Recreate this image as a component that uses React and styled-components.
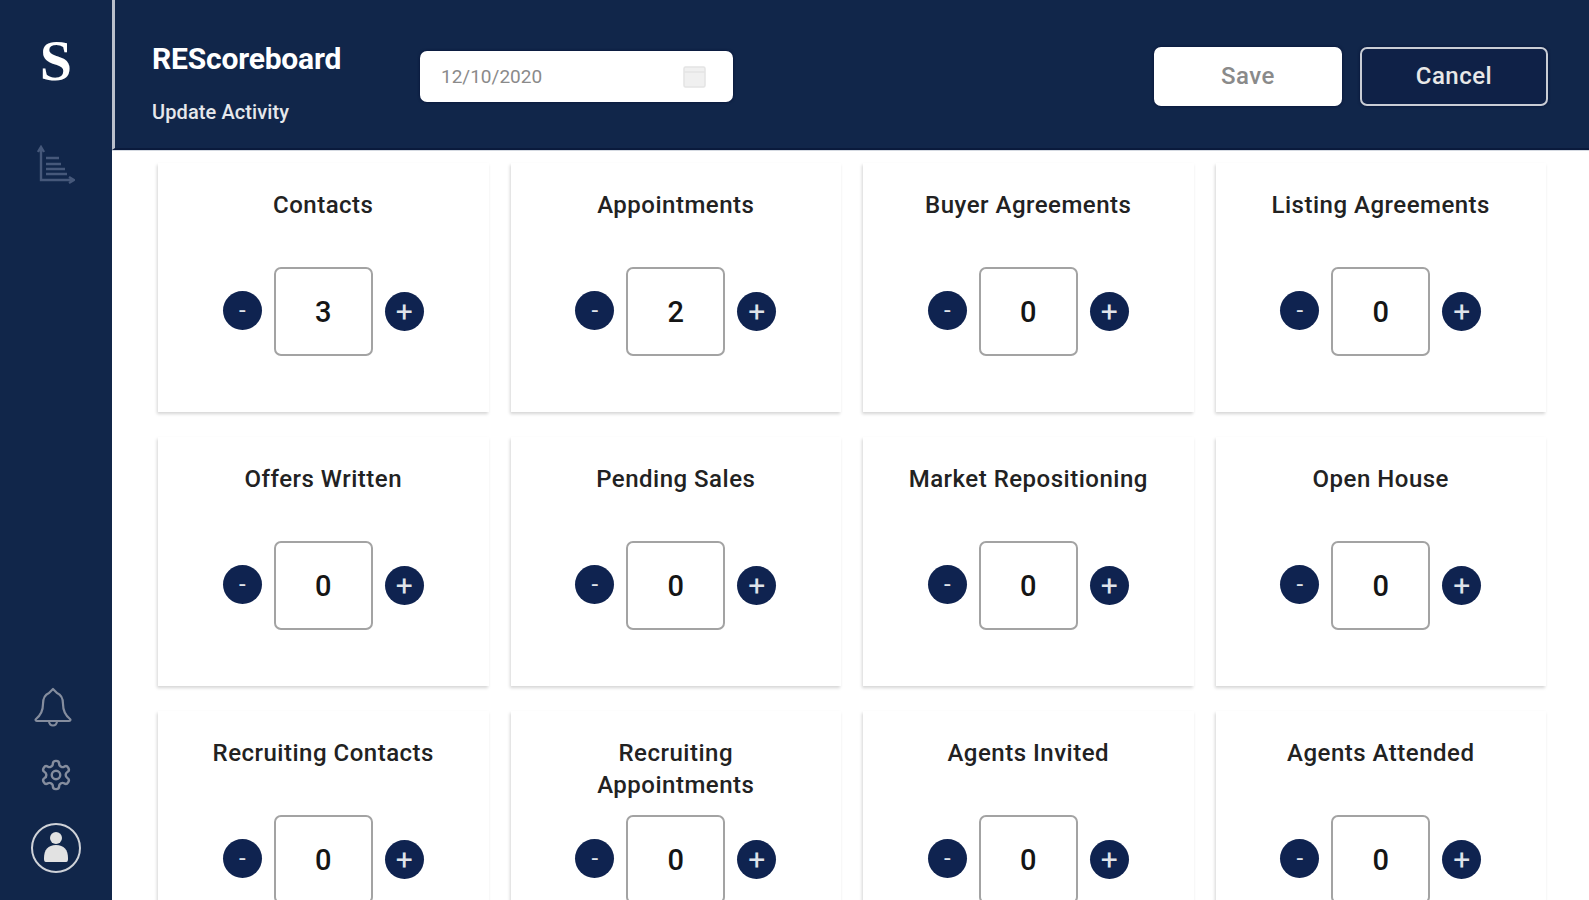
import React from 'react'
import styled, { createGlobalStyle } from 'styled-components'

const Global = createGlobalStyle`
    html, body {
        margin: 0;
        height: 100%;
        overflow: hidden;
        background: #fff;
        font-family: Roboto, "Liberation Sans", sans-serif;
    }
`

const Page = styled.div`
    display: flex;
    height: 900px;
    overflow: hidden;
`

const Sidebar = styled.nav`
    flex: 0 0 112px;
    display: flex;
    flex-direction: column;
    justify-content: space-between;
    align-items: center;
    background-color: #11264a;
    padding: 32px 0 27px;
    box-sizing: border-box;
`

const SideGroup = styled.div`
    display: flex;
    flex-direction: column;
    align-items: center;
    gap: ${props => props.$gap}px;
`

const Logo = styled.div`
    font-family: "Liberation Serif", serif;
    font-weight: 700;
    font-size: 58px;
    line-height: 58px;
    color: #fff;
`

const Main = styled.div`
    flex: 1;
    min-width: 0;
    display: flex;
    flex-direction: column;
`

const Header = styled.header`
    flex: 0 0 150px;
    box-sizing: border-box;
    display: flex;
    align-items: center;
    padding: 0 41px 0 37px;
    background-color: #11264a;
    border-left: 3px solid #b9bfcb;
    border-bottom: 2px solid #0a1a3c;
    box-shadow: 0 1px 0 #d5dae2;
`

const Titles = styled.div`
    flex: 0 0 268px;
    display: flex;
    flex-direction: column;
    gap: 24px;
    color: #fff;
    margin-top: 17px;
`

const AppName = styled.div`
    font-size: 30px;
    line-height: 34px;
    font-weight: 700;
    letter-spacing: -0.2px;
`

const PageName = styled.div`
    font-size: 20px;
    line-height: 24px;
    font-weight: 500;
    letter-spacing: 0.1px;
    color: #e6e8ec;
`

const DateField = styled.div`
    width: 313px;
    height: 51px;
    box-sizing: border-box;
    display: flex;
    align-items: center;
    justify-content: space-between;
    padding: 0 27px 0 21px;
    margin-top: 4px;
    background-color: #fff;
    border-radius: 7px;
    box-shadow: 0 0 3px #050f33;
    color: #8a8a8a;
    font-size: 19px;
`

const Actions = styled.div`
    margin-left: auto;
    display: flex;
    gap: 18px;
    margin-top: 4px;
`

const ActionButton = styled.button`
    width: 188px;
    height: 59px;
    box-sizing: border-box;
    font-family: inherit;
    font-size: 24px;
    font-weight: 500;
    letter-spacing: 0.5px;
    border-radius: 7px;
    border: 2px solid ${props => props.$primary ? '#fff' : '#c9cdd5'};
    background-color: ${props => props.$primary ? '#fff' : '#0f2147'};
    color: ${props => props.$primary ? '#8a8a8a' : '#e8e8e8'};
    box-shadow: 0 0 3px #050f33;
`

const Grid = styled.section`
    display: grid;
    grid-template-columns: repeat(4, 1fr);
    grid-auto-rows: 249px;
    gap: 25px 22px;
    padding: 13px 43px 0 46px;
`

const Card = styled.article`
    display: flex;
    flex-direction: column;
    align-items: center;
    box-sizing: border-box;
    padding-top: 26px;
    background-color: #fff;
    box-shadow: -1px 2px 3px rgba(0, 0, 0, 0.17);
`

const CardTitle = styled.h3`
    margin: 0;
    height: 64px;
    font-size: 24px;
    line-height: 32px;
    font-weight: 500;
    letter-spacing: 0.5px;
    color: #222;
    text-align: center;
    width: 250px;
`

const Stepper = styled.div`
    margin-top: 14px;
    display: flex;
    align-items: center;
    gap: 12px;
`

const RoundButton = styled.button`
    width: 39px;
    height: 39px;
    padding: 0;
    border: none;
    border-radius: 50%;
    display: flex;
    align-items: center;
    justify-content: center;
    font-family: inherit;
    font-size: ${props => props.$minus ? 24 : 30}px;
    font-weight: 400;
    line-height: 1;
    color: #dfe3ea;
    background-color: #0f2350;
    margin-top: ${props => props.$minus ? -3 : 0}px;
`

const ValueBox = styled.div`
    width: 99px;
    height: 89px;
    box-sizing: border-box;
    display: flex;
    align-items: center;
    justify-content: center;
    border: 2px solid #a3a3a3;
    border-radius: 7px;
    font-size: 29px;
    font-weight: 500;
    color: #151515;
`

const Avatar = styled.div`
    width: 50px;
    height: 50px;
    box-sizing: border-box;
    border: 2px solid #cfd2d8;
    border-radius: 50%;
    display: flex;
    align-items: center;
    justify-content: center;
`

const BellWrap = styled.div`
    margin-left: -6px;
    display: flex;
`

function ChartIcon() {
    return (
        <svg width="38" height="40" viewBox="0 0 38 40" fill="none" stroke="#46587a" strokeWidth="2.4" style={{ marginTop: 55 }}>
            <path d="M4 3v32h32" />
            <path d="M1 7l3-5 3 5M32 32l5 3-5 3" />
            <path d="M9 13h13M9 19h15M9 24h19M9 29h21" />
        </svg>
    )
}

function BellIcon() {
    return (
        <svg width="38" height="40" viewBox="0 0 38 40" fill="none" stroke="#858d9e" strokeWidth="2.2" strokeLinejoin="round">
            <path d="M19 2l4 4c5 2 6 6 6 11 0 7 2 11 7 15 1 1 0 2-1 2H3c-1 0-2-1-1-2 5-4 7-8 7-15 0-5 1-9 6-11z" />
            <path d="M15 34c0 6 8 6 8 0" />
        </svg>
    )
}

function GearIcon() {
    return (
        <svg width="34" height="36" viewBox="0 0 24 24" fill="none" stroke="#858d9e" strokeWidth="1.7" strokeLinecap="round" strokeLinejoin="round">
            <path d="M12.22 2h-.44a2 2 0 0 0-2 2v.18a2 2 0 0 1-1 1.73l-.43.25a2 2 0 0 1-2 0l-.15-.08a2 2 0 0 0-2.73.73l-.22.38a2 2 0 0 0 .73 2.73l.15.1a2 2 0 0 1 1 1.72v.51a2 2 0 0 1-1 1.74l-.15.09a2 2 0 0 0-.73 2.73l.22.38a2 2 0 0 0 2.73.73l.15-.08a2 2 0 0 1 2 0l.43.25a2 2 0 0 1 1 1.73V20a2 2 0 0 0 2 2h.44a2 2 0 0 0 2-2v-.18a2 2 0 0 1 1-1.73l.43-.25a2 2 0 0 1 2 0l.15.08a2 2 0 0 0 2.73-.73l.22-.39a2 2 0 0 0-.73-2.73l-.15-.08a2 2 0 0 1-1-1.74v-.5a2 2 0 0 1 1-1.74l.15-.09a2 2 0 0 0 .73-2.73l-.22-.38a2 2 0 0 0-2.73-.73l-.15.08a2 2 0 0 1-2 0l-.43-.25a2 2 0 0 1-1-1.73V4a2 2 0 0 0-2-2z" />
            <circle cx="12" cy="12" r="3" />
        </svg>
    )
}

function PersonIcon() {
    return (
        <svg width="26" height="36" viewBox="0 0 26 36" fill="#e2e2e2">
            <circle cx="13" cy="8" r="6" />
            <path d="M3 32c-2 0-2-2-2-4 0-8 4-13 12-13s12 5 12 13c0 2 0 4-2 4z" />
        </svg>
    )
}

function CalendarIcon() {
    return (
        <svg width="23" height="23" viewBox="0 0 23 23" fill="#f0f0f0" stroke="#e4e4e4" strokeWidth="1.5">
            <rect x="1" y="2" width="21" height="20" rx="1.5" />
            <path d="M1 7h21" fill="none" />
        </svg>
    )
}

const activities = [
    { name: 'Contacts', value: 3 },
    { name: 'Appointments', value: 2 },
    { name: 'Buyer Agreements', value: 0 },
    { name: 'Listing Agreements', value: 0 },
    { name: 'Offers Written', value: 0 },
    { name: 'Pending Sales', value: 0 },
    { name: 'Market Repositioning', value: 0 },
    { name: 'Open House', value: 0 },
    { name: 'Recruiting Contacts', value: 0 },
    { name: 'Recruiting Appointments', value: 0 },
    { name: 'Agents Invited', value: 0 },
    { name: 'Agents Attended', value: 0 },
]

export default function App() {
    return (
        <Page>
            <Global />
            <Sidebar>
                <SideGroup $gap={0}>
                    <Logo>S</Logo>
                    <ChartIcon />
                </SideGroup>
                <SideGroup $gap={30}>
                    <BellWrap><BellIcon /></BellWrap>
                    <GearIcon />
                    <Avatar><PersonIcon /></Avatar>
                </SideGroup>
            </Sidebar>
            <Main>
                <Header>
                    <Titles>
                        <AppName>REScoreboard</AppName>
                        <PageName>Update Activity</PageName>
                    </Titles>
                    <DateField>
                        12/10/2020
                        <CalendarIcon />
                    </DateField>
                    <Actions>
                        <ActionButton $primary>Save</ActionButton>
                        <ActionButton>Cancel</ActionButton>
                    </Actions>
                </Header>
                <Grid>
                    {activities.map(item => (
                        <Card key={item.name}>
                            <CardTitle>{item.name}</CardTitle>
                            <Stepper>
                                <RoundButton $minus>-</RoundButton>
                                <ValueBox>{item.value}</ValueBox>
                                <RoundButton>+</RoundButton>
                            </Stepper>
                        </Card>
                    ))}
                </Grid>
            </Main>
        </Page>
    )
}
